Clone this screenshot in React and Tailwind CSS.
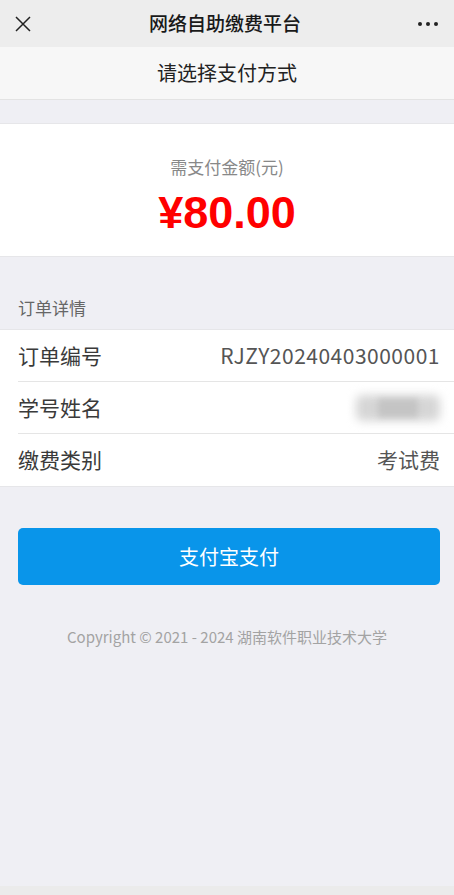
const cjk = "font-['Noto_Sans_CJK_SC',sans-serif]";

function Row({ label, children, last }) {
  return (
    <div className="pl-[18px]">
      <div
        className={`flex h-[52px] items-center justify-between pr-[14px] ${
          last ? "" : "border-b border-[#e5e5e5]"
        }`}
      >
        <span className="text-[21px] text-[#3a3a3a]">{label}</span>
        {children}
      </div>
    </div>
  );
}

export default function App() {
  return (
    <div className={`flex min-h-[895px] flex-col bg-[#efeff4] ${cjk}`}>
      <div className="flex h-[47px] items-center justify-between bg-[#ededed] px-[14px]">
        <svg width="18" height="18" viewBox="0 0 18 18" fill="none" stroke="#222" strokeWidth="1.5">
          <path d="M2 2L16 16M16 2L2 16" />
        </svg>
        <span className="text-[19px] font-medium text-[#191919]">网络自助缴费平台</span>
        <div className="flex w-[22px] gap-[4px] pr-[2px]">
          <span className="h-[4px] w-[4px] rounded-full bg-[#222]" />
          <span className="h-[4px] w-[4px] rounded-full bg-[#222]" />
          <span className="h-[4px] w-[4px] rounded-full bg-[#222]" />
        </div>
      </div>

      <div className="flex h-[53px] items-center justify-center border-b border-[#e3e3e3] bg-[#f7f7f7]">
        <span className="text-[20px] text-[#222]">请选择支付方式</span>
      </div>

      <div className="mt-[23px] flex h-[134px] flex-col items-center border-y border-[#e6e6e9] bg-white pt-[31px]">
        <span className="text-[17px] leading-[24px] text-[#888]">需支付金额(元)</span>
        <span className="mt-[9px] font-['Liberation_Sans',sans-serif] text-[45px] leading-[50px] font-bold text-[#ff0000]">
          ¥80.00
        </span>
      </div>

      <div className="flex h-[72px] items-end px-[18px] pb-[9px]">
        <span className="text-[17px] text-[#666]">订单详情</span>
      </div>

      <div className="border-y border-[#e6e6e9] bg-white">
        <Row label="订单编号">
          <span className="text-[21px] tracking-[0.5px] text-[#555]">RJZY20240403000001</span>
        </Row>
        <Row label="学号姓名">
          <div className="relative h-[26px] w-[84px]">
            <div className="absolute inset-0 rounded-md bg-[#d6d6d6] blur-[5px]" />
            <div className="absolute top-[4px] left-[22px] h-[18px] w-[40px] bg-[#c4c4c4] blur-[3px]" />
          </div>
        </Row>
        <Row label="缴费类别" last>
          <span className="text-[21px] text-[#555]">考试费</span>
        </Row>
      </div>

      <div className="pt-[41px] pr-[14px] pl-[18px]">
        <button
          type="button"
          className="flex h-[57px] w-full items-center justify-center rounded-[5px] bg-[#0995ea] text-[20px] text-white"
        >
          支付宝支付
        </button>
      </div>

      <div className="pt-[41px] text-center text-[15px] text-[#a3a3a3]">
        Copyright © 2021 - 2024 湖南软件职业技术大学
      </div>

      <div className="flex-1" />
      <div className="h-[9px] bg-[#ebebeb]" />
    </div>
  );
}
